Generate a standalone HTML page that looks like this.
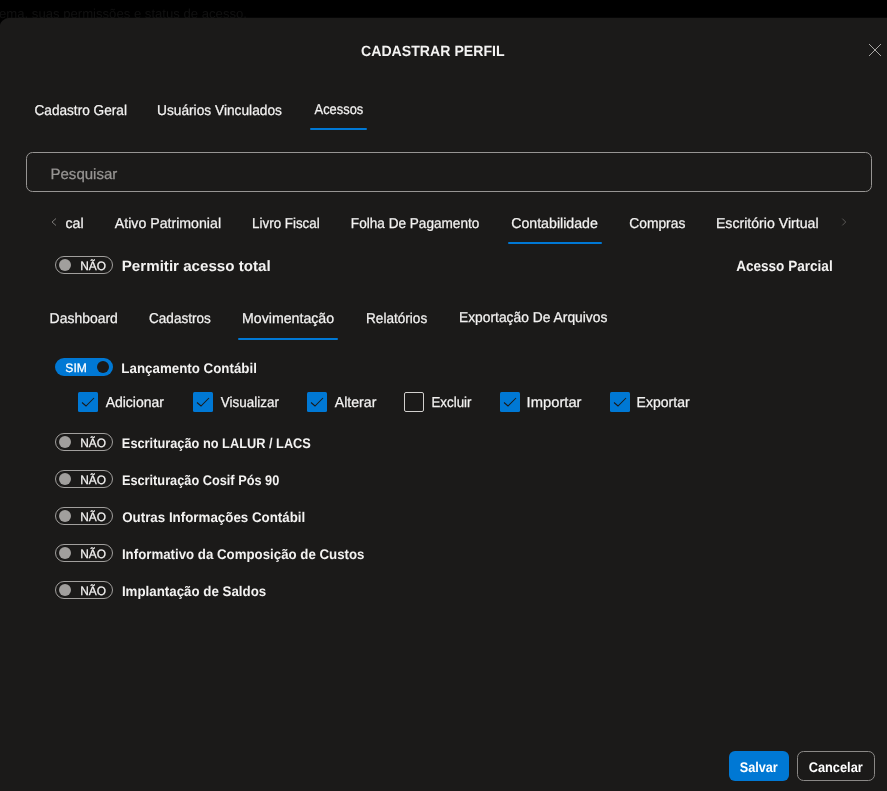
<!DOCTYPE html>
<html><head><meta charset="utf-8"><style>
html,body{margin:0;padding:0;background:#000;overflow:hidden;}
svg{display:block;font-family:"Liberation Sans",sans-serif;will-change:transform;text-rendering:geometricPrecision;}
</style></head><body>
<svg width="887" height="791" viewBox="0 0 887 791">
<rect width="887" height="791" fill="#000"/>
<text x="-1" y="17.9" font-size="13" fill="#111111" textLength="248" lengthAdjust="spacingAndGlyphs">ema, suas permissões e status de acesso.</text>
<rect x="-0.5" y="17.8" width="900" height="800" rx="10" fill="#1b1a19"/>
<!-- close X -->
<path d="M869 44 L881 56 M881 44 L869 56" stroke="#a8a6a4" stroke-width="1" fill="none"/>
<!-- tab underlines -->
<rect x="310" y="128" width="57" height="2" rx="1" fill="#0078d4"/>
<rect x="508" y="242" width="94" height="2" rx="1" fill="#0078d4"/>
<rect x="238" y="338" width="100" height="2" rx="1" fill="#0078d4"/>
<!-- search -->
<rect x="26.5" y="152.5" width="845" height="39" rx="6" fill="none" stroke="#979593" stroke-width="1"/>
<!-- chevrons -->
<path d="M56 218.5 L52 222 L56 225.5" stroke="#797775" stroke-width="1" fill="none"/>
<path d="M842.3 218.6 L845.7 222 L842.3 225.4" stroke="#5a5856" stroke-width="1" fill="none"/>
<rect x="55.5" y="256.5" width="57" height="17" rx="8.5" fill="none" stroke="#a19f9d" stroke-width="1"/>
<circle cx="65" cy="265" r="6" fill="#a19f9d"/>
<rect x="55.5" y="433.5" width="57" height="17" rx="8.5" fill="none" stroke="#a19f9d" stroke-width="1"/>
<circle cx="65" cy="442" r="6" fill="#a19f9d"/>
<rect x="55.5" y="470.5" width="57" height="17" rx="8.5" fill="none" stroke="#a19f9d" stroke-width="1"/>
<circle cx="65" cy="479" r="6" fill="#a19f9d"/>
<rect x="55.5" y="507.5" width="57" height="17" rx="8.5" fill="none" stroke="#a19f9d" stroke-width="1"/>
<circle cx="65" cy="516" r="6" fill="#a19f9d"/>
<rect x="55.5" y="544.5" width="57" height="17" rx="8.5" fill="none" stroke="#a19f9d" stroke-width="1"/>
<circle cx="65" cy="553" r="6" fill="#a19f9d"/>
<rect x="55.5" y="581.5" width="57" height="17" rx="8.5" fill="none" stroke="#a19f9d" stroke-width="1"/>
<circle cx="65" cy="590" r="6" fill="#a19f9d"/>
<rect x="55" y="358" width="58" height="18" rx="9" fill="#0078d4"/>
<circle cx="103" cy="367" r="6" fill="#1b1a19"/>
<rect x="78" y="392" width="20" height="20" rx="1.5" fill="#0078d4"/>
<path d="M82 402.5 L86 406 L94 398" fill="none" stroke="#1b1a19" stroke-width="1.05"/>
<rect x="193" y="392" width="20" height="20" rx="1.5" fill="#0078d4"/>
<path d="M197 402.5 L201 406 L209 398" fill="none" stroke="#1b1a19" stroke-width="1.05"/>
<rect x="307" y="392" width="20" height="20" rx="1.5" fill="#0078d4"/>
<path d="M311 402.5 L315 406 L323 398" fill="none" stroke="#1b1a19" stroke-width="1.05"/>
<rect x="404.5" y="392.5" width="19" height="19" rx="1.5" fill="none" stroke="#d2d0ce" stroke-width="1"/>
<rect x="500" y="392" width="20" height="20" rx="1.5" fill="#0078d4"/>
<path d="M504 402.5 L508 406 L516 398" fill="none" stroke="#1b1a19" stroke-width="1.05"/>
<rect x="610" y="392" width="20" height="20" rx="1.5" fill="#0078d4"/>
<path d="M614 402.5 L618 406 L626 398" fill="none" stroke="#1b1a19" stroke-width="1.05"/>
<!-- buttons -->
<rect x="729" y="751" width="60" height="30" rx="6" fill="#0078d4"/>
<rect x="797.5" y="751.5" width="77" height="29" rx="6" fill="none" stroke="#8a8886" stroke-width="1"/>
<text x="361.02" y="55.70" font-size="14.8" font-weight="700" fill="#f3f2f1" textLength="143.58" lengthAdjust="spacingAndGlyphs">CADASTRAR PERFIL</text>
<text x="34.46" y="114.80" font-size="14.3" font-weight="400" fill="#f3f2f1" stroke="#f3f2f1" stroke-width="0.25" textLength="92.47" lengthAdjust="spacingAndGlyphs">Cadastro Geral</text>
<text x="156.97" y="114.80" font-size="14.3" font-weight="400" fill="#f3f2f1" stroke="#f3f2f1" stroke-width="0.25" textLength="124.98" lengthAdjust="spacingAndGlyphs">Usuários Vinculados</text>
<text x="314.54" y="114.20" font-size="14.3" font-weight="400" fill="#f3f2f1" stroke="#f3f2f1" stroke-width="0.25" textLength="48.72" lengthAdjust="spacingAndGlyphs">Acessos</text>
<text x="50.46" y="178.60" font-size="15.0" font-weight="400" fill="#979593" stroke="#979593" stroke-width="0.25" textLength="66.92" lengthAdjust="spacingAndGlyphs">Pesquisar</text>
<text x="65.39" y="228.00" font-size="14.3" font-weight="400" fill="#f3f2f1" stroke="#f3f2f1" stroke-width="0.25" textLength="18.20" lengthAdjust="spacingAndGlyphs">cal</text>
<text x="114.79" y="228.00" font-size="14.3" font-weight="400" fill="#f3f2f1" stroke="#f3f2f1" stroke-width="0.25" textLength="106.26" lengthAdjust="spacingAndGlyphs">Ativo Patrimonial</text>
<text x="252.12" y="228.00" font-size="14.3" font-weight="400" fill="#f3f2f1" stroke="#f3f2f1" stroke-width="0.25" textLength="67.55" lengthAdjust="spacingAndGlyphs">Livro Fiscal</text>
<text x="350.85" y="228.00" font-size="14.3" font-weight="400" fill="#f3f2f1" stroke="#f3f2f1" stroke-width="0.25" textLength="128.49" lengthAdjust="spacingAndGlyphs">Folha De Pagamento</text>
<text x="511.16" y="228.00" font-size="14.3" font-weight="400" fill="#f3f2f1" stroke="#f3f2f1" stroke-width="0.25" textLength="86.73" lengthAdjust="spacingAndGlyphs">Contabilidade</text>
<text x="629.23" y="228.00" font-size="14.3" font-weight="400" fill="#f3f2f1" stroke="#f3f2f1" stroke-width="0.25" textLength="56.07" lengthAdjust="spacingAndGlyphs">Compras</text>
<text x="715.88" y="228.00" font-size="14.3" font-weight="400" fill="#f3f2f1" stroke="#f3f2f1" stroke-width="0.25" textLength="102.70" lengthAdjust="spacingAndGlyphs">Escritório Virtual</text>
<text x="121.77" y="271.10" font-size="15.0" font-weight="700" fill="#f3f2f1" textLength="148.93" lengthAdjust="spacingAndGlyphs">Permitir acesso total</text>
<text x="736.15" y="270.80" font-size="14.8" font-weight="700" fill="#f3f2f1" textLength="96.54" lengthAdjust="spacingAndGlyphs">Acesso Parcial</text>
<text x="49.60" y="323.00" font-size="14.3" font-weight="400" fill="#f3f2f1" stroke="#f3f2f1" stroke-width="0.25" textLength="68.27" lengthAdjust="spacingAndGlyphs">Dashboard</text>
<text x="149.05" y="323.00" font-size="14.3" font-weight="400" fill="#f3f2f1" stroke="#f3f2f1" stroke-width="0.25" textLength="61.73" lengthAdjust="spacingAndGlyphs">Cadastros</text>
<text x="241.98" y="323.00" font-size="14.3" font-weight="400" fill="#f3f2f1" stroke="#f3f2f1" stroke-width="0.25" textLength="92.18" lengthAdjust="spacingAndGlyphs">Movimentação</text>
<text x="366.06" y="323.00" font-size="14.3" font-weight="400" fill="#f3f2f1" stroke="#f3f2f1" stroke-width="0.25" textLength="61.18" lengthAdjust="spacingAndGlyphs">Relatórios</text>
<text x="458.92" y="321.80" font-size="14.3" font-weight="400" fill="#f3f2f1" stroke="#f3f2f1" stroke-width="0.25" textLength="148.50" lengthAdjust="spacingAndGlyphs">Exportação De Arquivos</text>
<text x="121.37" y="372.70" font-size="14.0" font-weight="700" fill="#f3f2f1" textLength="135.57" lengthAdjust="spacingAndGlyphs">Lançamento Contábil</text>
<text x="105.65" y="407.00" font-size="14.4" font-weight="400" fill="#f3f2f1" stroke="#f3f2f1" stroke-width="0.25" textLength="58.30" lengthAdjust="spacingAndGlyphs">Adicionar</text>
<text x="220.81" y="407.00" font-size="14.4" font-weight="400" fill="#f3f2f1" stroke="#f3f2f1" stroke-width="0.25" textLength="58.06" lengthAdjust="spacingAndGlyphs">Visualizar</text>
<text x="334.81" y="407.00" font-size="14.4" font-weight="400" fill="#f3f2f1" stroke="#f3f2f1" stroke-width="0.25" textLength="41.55" lengthAdjust="spacingAndGlyphs">Alterar</text>
<text x="431.48" y="407.00" font-size="14.4" font-weight="400" fill="#f3f2f1" stroke="#f3f2f1" stroke-width="0.25" textLength="40.00" lengthAdjust="spacingAndGlyphs">Excluir</text>
<text x="526.64" y="407.00" font-size="14.4" font-weight="400" fill="#f3f2f1" stroke="#f3f2f1" stroke-width="0.25" textLength="54.89" lengthAdjust="spacingAndGlyphs">Importar</text>
<text x="636.59" y="407.00" font-size="14.4" font-weight="400" fill="#f3f2f1" stroke="#f3f2f1" stroke-width="0.25" textLength="53.05" lengthAdjust="spacingAndGlyphs">Exportar</text>
<text x="121.87" y="447.80" font-size="14.0" font-weight="700" fill="#f3f2f1" textLength="189.03" lengthAdjust="spacingAndGlyphs">Escrituração no LALUR / LACS</text>
<text x="121.90" y="484.80" font-size="14.0" font-weight="700" fill="#f3f2f1" textLength="157.41" lengthAdjust="spacingAndGlyphs">Escrituração Cosif Pós 90</text>
<text x="122.21" y="521.80" font-size="14.0" font-weight="700" fill="#f3f2f1" textLength="183.08" lengthAdjust="spacingAndGlyphs">Outras Informações Contábil</text>
<text x="121.95" y="558.80" font-size="14.0" font-weight="700" fill="#f3f2f1" textLength="242.52" lengthAdjust="spacingAndGlyphs">Informativo da Composição de Custos</text>
<text x="121.93" y="595.80" font-size="14.0" font-weight="700" fill="#f3f2f1" textLength="144.26" lengthAdjust="spacingAndGlyphs">Implantação de Saldos</text>
<text x="739.68" y="771.50" font-size="14.0" font-weight="700" fill="#ffffff" textLength="38.06" lengthAdjust="spacingAndGlyphs">Salvar</text>
<text x="808.66" y="771.90" font-size="14.0" font-weight="700" fill="#ffffff" textLength="54.09" lengthAdjust="spacingAndGlyphs">Cancelar</text>
<text x="65.36" y="372.00" font-size="12.2" font-weight="400" fill="#ffffff" stroke="#ffffff" stroke-width="0.25" textLength="21.53" lengthAdjust="spacingAndGlyphs">SIM</text>
<text x="80.17" y="269.80" font-size="12.2" font-weight="400" fill="#f3f2f1" stroke="#f3f2f1" stroke-width="0.25" textLength="25.81" lengthAdjust="spacingAndGlyphs">NÃO</text>
<text x="80.17" y="446.80" font-size="12.2" font-weight="400" fill="#f3f2f1" stroke="#f3f2f1" stroke-width="0.25" textLength="25.81" lengthAdjust="spacingAndGlyphs">NÃO</text>
<text x="80.17" y="483.80" font-size="12.2" font-weight="400" fill="#f3f2f1" stroke="#f3f2f1" stroke-width="0.25" textLength="25.81" lengthAdjust="spacingAndGlyphs">NÃO</text>
<text x="80.17" y="520.80" font-size="12.2" font-weight="400" fill="#f3f2f1" stroke="#f3f2f1" stroke-width="0.25" textLength="25.81" lengthAdjust="spacingAndGlyphs">NÃO</text>
<text x="80.17" y="557.80" font-size="12.2" font-weight="400" fill="#f3f2f1" stroke="#f3f2f1" stroke-width="0.25" textLength="25.81" lengthAdjust="spacingAndGlyphs">NÃO</text>
<text x="80.17" y="594.80" font-size="12.2" font-weight="400" fill="#f3f2f1" stroke="#f3f2f1" stroke-width="0.25" textLength="25.81" lengthAdjust="spacingAndGlyphs">NÃO</text>
</svg>
</body></html>
